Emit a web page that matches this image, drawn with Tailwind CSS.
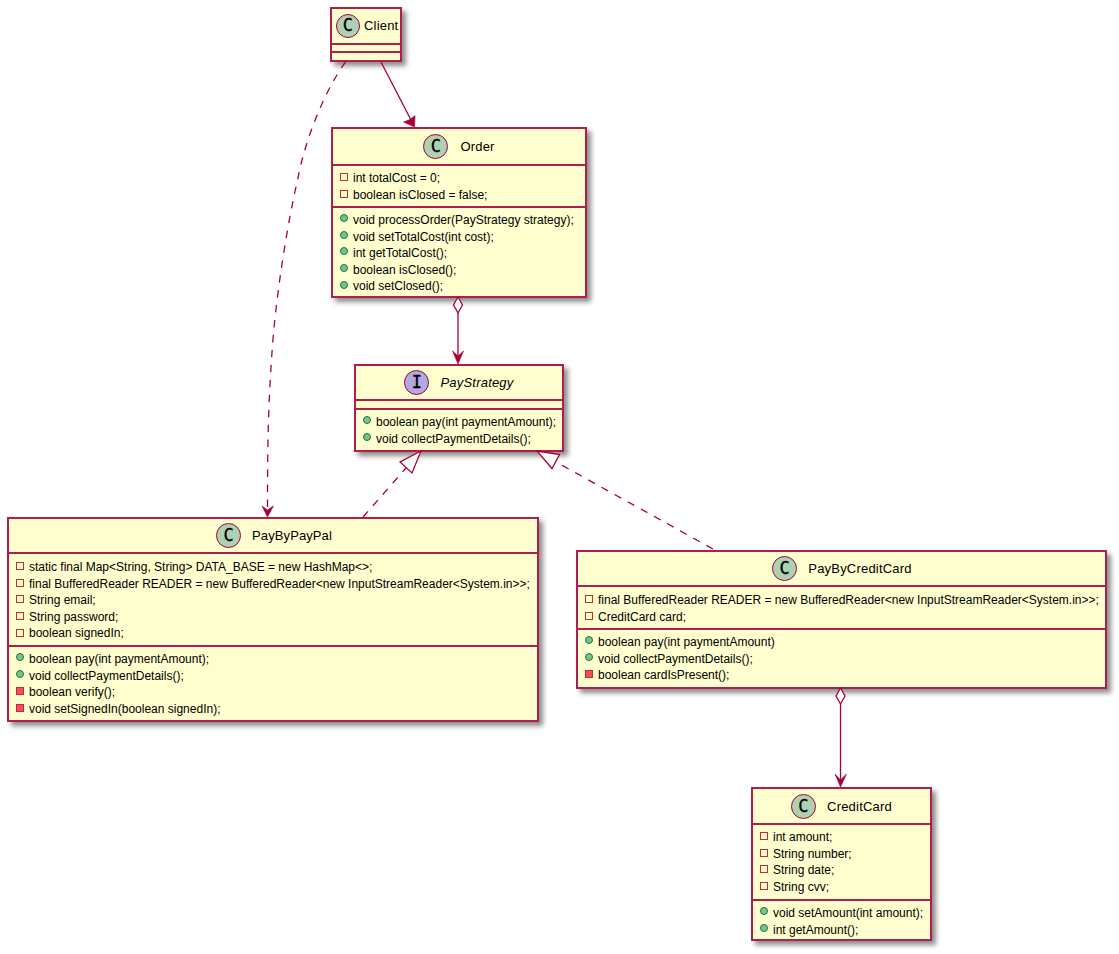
<!DOCTYPE html>
<html lang="en">
<head>
    <meta charset="UTF-8">
    <title>Strategy pattern class diagram</title>
    <script src="https://cdn.jsdelivr.net/npm/@tailwindcss/browser@4"></script>
</head>
<body class="bg-white">
    <div class="relative w-[1119px] h-[954px] overflow-hidden font-['Liberation_Sans',sans-serif] text-[12px] leading-[16.6px] text-black">

        <!-- edges -->
        <svg class="absolute inset-0 z-20" width="1119" height="954" fill="none" stroke="#A80036" stroke-width="1.3">
            <path d="M381 62L411 120"/>
            <path d="M414.500 127L403.500 122L410 119.500L415 115.500z" fill="#A80036" stroke-width="0.6"/>
            <path d="M345.500 62C325 90 305 140 298 178C288 220 275 300 271.700 357C268 410 267.500 450 267.500 510" stroke-dasharray="7.5 7.5"/>
            <path d="M267.500 517L262 506L267.500 510L273.500 506z" fill="#A80036" stroke-width="0.6"/>
            <path d="M458 313V358"/>
            <path d="M458 297L462.500 305L458 313L453.500 305z" fill="#fff"/>
            <path d="M458 364L452.500 351L458 356L463.500 351z" fill="#A80036" stroke-width="0.6"/>
            <path d="M363 517L406 468" stroke-dasharray="7.5 7.5"/>
            <path d="M421 451L400 462L412 473z" fill="#fff"/>
            <path d="M713 549L556 462" stroke-dasharray="7.5 7.5"/>
            <path d="M537 451L559.500 454.500L552 468.500z" fill="#fff"/>
            <path d="M840.500 704V781"/>
            <path d="M840.500 688L845 696L840.500 704L836 696z" fill="#fff"/>
            <path d="M840.500 787L835 774L840.500 780L846.500 774z" fill="#A80036" stroke-width="0.6"/>
        </svg>

        <!-- Client -->
        <div class="absolute left-[330px] top-[7px] w-[72px] h-[55px] flex flex-col border-2 border-[#B01E4E] bg-[#FEFECE] shadow-[4px_4px_5px_rgba(0,0,0,0.45)]">
            <div class="h-[35px] flex items-center pl-[4px] gap-[4px] text-[13px] tracking-[0.2px]">
                <span class="w-[24px] h-[24px] shrink-0 rounded-full border border-[#A80036] bg-[#ADD1B2] flex items-center justify-center font-['DejaVu_Sans_Mono',monospace] text-[17px] [-webkit-text-stroke:0.3px_black]">C</span>
                <span class="translate-y-[1px]">Client</span>
            </div>
            <div class="h-[9px] border-t-2 border-[#B01E4E]"></div>
            <div class="h-[9px] border-t-2 border-[#B01E4E]"></div>
        </div>

        <!-- Order -->
        <div class="absolute left-[331px] top-[127px] w-[256px] h-[171px] flex flex-col border-2 border-[#B01E4E] bg-[#FEFECE] shadow-[4px_4px_5px_rgba(0,0,0,0.45)]">
            <div class="h-[35px] flex items-center justify-center gap-[12px] text-[13px] tracking-[0.2px]">
                <span class="w-[25px] h-[25px] shrink-0 rounded-full border border-[#A80036] bg-[#ADD1B2] flex items-center justify-center font-['DejaVu_Sans_Mono',monospace] text-[17px] [-webkit-text-stroke:0.3px_black]">C</span>
                <span class="translate-y-[1px]">Order</span>
            </div>
            <div class="h-[42px] pt-[4px] border-t-2 border-[#B01E4E]">
                <div class="flex items-center pl-[7px] gap-[5px]"><span class="w-[8px] h-[8px] -translate-y-[1px] border border-[#C82930]"></span>int totalCost = 0;</div>
                <div class="flex items-center pl-[7px] gap-[5px]"><span class="w-[8px] h-[8px] -translate-y-[1px] border border-[#C82930]"></span>boolean isClosed = false;</div>
            </div>
            <div class="flex-1 pt-[4px] border-t-2 border-[#B01E4E]">
                <div class="flex items-center pl-[7px] gap-[5px]"><span class="w-[8px] h-[8px] -translate-y-[2px] rounded-full border border-[#038048] bg-[#84BE84]"></span>void processOrder(PayStrategy strategy);</div>
                <div class="flex items-center pl-[7px] gap-[5px]"><span class="w-[8px] h-[8px] -translate-y-[2px] rounded-full border border-[#038048] bg-[#84BE84]"></span>void setTotalCost(int cost);</div>
                <div class="flex items-center pl-[7px] gap-[5px]"><span class="w-[8px] h-[8px] -translate-y-[2px] rounded-full border border-[#038048] bg-[#84BE84]"></span>int getTotalCost();</div>
                <div class="flex items-center pl-[7px] gap-[5px]"><span class="w-[8px] h-[8px] -translate-y-[2px] rounded-full border border-[#038048] bg-[#84BE84]"></span>boolean isClosed();</div>
                <div class="flex items-center pl-[7px] gap-[5px]"><span class="w-[8px] h-[8px] -translate-y-[2px] rounded-full border border-[#038048] bg-[#84BE84]"></span>void setClosed();</div>
            </div>
        </div>

        <!-- PayStrategy -->
        <div class="absolute left-[354px] top-[364px] w-[210px] h-[88px] flex flex-col border-2 border-[#B01E4E] bg-[#FEFECE] shadow-[4px_4px_5px_rgba(0,0,0,0.45)]">
            <div class="h-[33px] flex items-center justify-center gap-[11px] text-[13px] tracking-[0.2px] italic">
                <span class="w-[25px] h-[25px] shrink-0 rounded-full border border-[#A80036] bg-[#B4A7E5] flex items-center justify-center font-['DejaVu_Sans_Mono',monospace] text-[17px] [-webkit-text-stroke:0.3px_black] not-italic">I</span>
                <span class="translate-y-[1px]">PayStrategy</span>
            </div>
            <div class="h-[9px] border-t-2 border-[#B01E4E]"></div>
            <div class="flex-1 pt-[4px] border-t-2 border-[#B01E4E]">
                <div class="flex items-center pl-[7px] gap-[5px]"><span class="w-[8px] h-[8px] -translate-y-[2px] rounded-full border border-[#038048] bg-[#84BE84]"></span>boolean pay(int paymentAmount);</div>
                <div class="flex items-center pl-[7px] gap-[5px]"><span class="w-[8px] h-[8px] -translate-y-[2px] rounded-full border border-[#038048] bg-[#84BE84]"></span>void collectPaymentDetails();</div>
            </div>
        </div>

        <!-- PayByPayPal -->
        <div class="absolute left-[7px] top-[517px] w-[532px] h-[205px] flex flex-col border-2 border-[#B01E4E] bg-[#FEFECE] shadow-[4px_4px_5px_rgba(0,0,0,0.45)]">
            <div class="h-[33px] flex items-center justify-center gap-[11px] pl-[2px] text-[13px] tracking-[0.1px]">
                <span class="w-[25px] h-[25px] shrink-0 rounded-full border border-[#A80036] bg-[#ADD1B2] flex items-center justify-center font-['DejaVu_Sans_Mono',monospace] text-[17px] [-webkit-text-stroke:0.3px_black]">C</span>
                <span class="translate-y-[1px]">PayByPayPal</span>
            </div>
            <div class="h-[93px] pt-[5px] border-t-2 border-[#B01E4E]">
                <div class="flex items-center pl-[7px] gap-[5px]"><span class="w-[8px] h-[8px] -translate-y-[1px] border border-[#C82930]"></span>static final Map&lt;String, String&gt; DATA_BASE = new HashMap&lt;&gt;;</div>
                <div class="flex items-center pl-[7px] gap-[5px]"><span class="w-[8px] h-[8px] -translate-y-[1px] border border-[#C82930]"></span>final BufferedReader READER = new BufferedReader&lt;new InputStreamReader&lt;System.in&gt;&gt;;</div>
                <div class="flex items-center pl-[7px] gap-[5px]"><span class="w-[8px] h-[8px] -translate-y-[1px] border border-[#C82930]"></span>String email;</div>
                <div class="flex items-center pl-[7px] gap-[5px]"><span class="w-[8px] h-[8px] -translate-y-[1px] border border-[#C82930]"></span>String password;</div>
                <div class="flex items-center pl-[7px] gap-[5px]"><span class="w-[8px] h-[8px] -translate-y-[1px] border border-[#C82930]"></span>boolean signedIn;</div>
            </div>
            <div class="flex-1 pt-[4px] border-t-2 border-[#B01E4E]">
                <div class="flex items-center pl-[7px] gap-[5px]"><span class="w-[8px] h-[8px] -translate-y-[2px] rounded-full border border-[#038048] bg-[#84BE84]"></span>boolean pay(int paymentAmount);</div>
                <div class="flex items-center pl-[7px] gap-[5px]"><span class="w-[8px] h-[8px] -translate-y-[2px] rounded-full border border-[#038048] bg-[#84BE84]"></span>void collectPaymentDetails();</div>
                <div class="flex items-center pl-[7px] gap-[5px]"><span class="w-[8px] h-[8px] -translate-y-[1px] border border-[#C82930] bg-[#F24D5C]"></span>boolean verify();</div>
                <div class="flex items-center pl-[7px] gap-[5px]"><span class="w-[8px] h-[8px] -translate-y-[1px] border border-[#C82930] bg-[#F24D5C]"></span>void setSignedIn(boolean signedIn);</div>
            </div>
        </div>

        <!-- PayByCreditCard -->
        <div class="absolute left-[576px] top-[550px] w-[531px] h-[139px] flex flex-col border-2 border-[#B01E4E] bg-[#FEFECE] shadow-[4px_4px_5px_rgba(0,0,0,0.45)]">
            <div class="h-[33px] flex items-center justify-center gap-[11px] pl-[1px] text-[13px] tracking-[0.2px]">
                <span class="w-[25px] h-[25px] shrink-0 rounded-full border border-[#A80036] bg-[#ADD1B2] flex items-center justify-center font-['DejaVu_Sans_Mono',monospace] text-[17px] [-webkit-text-stroke:0.3px_black]">C</span>
                <span class="translate-y-[1px]">PayByCreditCard</span>
            </div>
            <div class="h-[43px] pt-[5px] border-t-2 border-[#B01E4E]">
                <div class="flex items-center pl-[7px] gap-[5px]"><span class="w-[8px] h-[8px] -translate-y-[1px] border border-[#C82930]"></span>final BufferedReader READER = new BufferedReader&lt;new InputStreamReader&lt;System.in&gt;&gt;;</div>
                <div class="flex items-center pl-[7px] gap-[5px]"><span class="w-[8px] h-[8px] -translate-y-[1px] border border-[#C82930]"></span>CreditCard card;</div>
            </div>
            <div class="flex-1 pt-[4px] border-t-2 border-[#B01E4E]">
                <div class="flex items-center pl-[7px] gap-[5px]"><span class="w-[8px] h-[8px] -translate-y-[2px] rounded-full border border-[#038048] bg-[#84BE84]"></span>boolean pay(int paymentAmount)</div>
                <div class="flex items-center pl-[7px] gap-[5px]"><span class="w-[8px] h-[8px] -translate-y-[2px] rounded-full border border-[#038048] bg-[#84BE84]"></span>void collectPaymentDetails();</div>
                <div class="flex items-center pl-[7px] gap-[5px]"><span class="w-[8px] h-[8px] -translate-y-[1px] border border-[#C82930] bg-[#F24D5C]"></span>boolean cardIsPresent();</div>
            </div>
        </div>

        <!-- CreditCard -->
        <div class="absolute left-[751px] top-[787px] w-[181px] h-[154px] flex flex-col border-2 border-[#B01E4E] bg-[#FEFECE] shadow-[4px_4px_5px_rgba(0,0,0,0.45)]">
            <div class="h-[34px] flex items-center justify-center gap-[11px] text-[13px] tracking-[0.2px]">
                <span class="w-[25px] h-[25px] shrink-0 rounded-full border border-[#A80036] bg-[#ADD1B2] flex items-center justify-center font-['DejaVu_Sans_Mono',monospace] text-[17px] [-webkit-text-stroke:0.3px_black]">C</span>
                <span class="translate-y-[1px]">CreditCard</span>
            </div>
            <div class="h-[76px] pt-[4px] border-t-2 border-[#B01E4E]">
                <div class="flex items-center pl-[7px] gap-[5px]"><span class="w-[8px] h-[8px] -translate-y-[1px] border border-[#C82930]"></span>int amount;</div>
                <div class="flex items-center pl-[7px] gap-[5px]"><span class="w-[8px] h-[8px] -translate-y-[1px] border border-[#C82930]"></span>String number;</div>
                <div class="flex items-center pl-[7px] gap-[5px]"><span class="w-[8px] h-[8px] -translate-y-[1px] border border-[#C82930]"></span>String date;</div>
                <div class="flex items-center pl-[7px] gap-[5px]"><span class="w-[8px] h-[8px] -translate-y-[1px] border border-[#C82930]"></span>String cvv;</div>
            </div>
            <div class="flex-1 pt-[4px] border-t-2 border-[#B01E4E]">
                <div class="flex items-center pl-[7px] gap-[5px]"><span class="w-[8px] h-[8px] -translate-y-[2px] rounded-full border border-[#038048] bg-[#84BE84]"></span>void setAmount(int amount);</div>
                <div class="flex items-center pl-[7px] gap-[5px]"><span class="w-[8px] h-[8px] -translate-y-[2px] rounded-full border border-[#038048] bg-[#84BE84]"></span>int getAmount();</div>
            </div>
        </div>
    </div>
</body>
</html>
